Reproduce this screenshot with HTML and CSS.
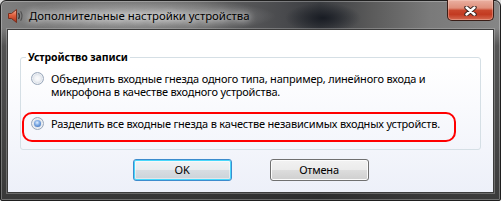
FILE: index.html
```html
<!DOCTYPE html>
<html lang="ru">
<head>
<meta charset="utf-8">
<title>Дополнительные настройки устройства</title>
<link rel="stylesheet" href="styles.css">
</head>
<body>
<div class="window">
  <div class="titlebar">
    <svg class="app-icon" width="16" height="16" viewBox="0 0 16 16">
      <defs>
        <linearGradient id="spk" x1="0" y1="0" x2="0" y2="1">
          <stop offset="0" stop-color="#f7b49c"/>
          <stop offset="0.45" stop-color="#e0603e"/>
          <stop offset="1" stop-color="#a8301a"/>
        </linearGradient>
      </defs>
      <path d="M1.5 5.5 H4.5 L9.5 1.5 V14.5 L4.5 10.5 H1.5 Z" fill="url(#spk)" stroke="#7a2f1c" stroke-width="1" stroke-linejoin="round"/>
      <path d="M11.5 5 Q13.3 8 11.5 11" fill="none" stroke="#3a3a3a" stroke-width="1.3"/>
      <path d="M13.6 3.2 Q16.4 8 13.6 12.8" fill="none" stroke="#505050" stroke-width="1.1"/>
    </svg>
    <span class="title">Дополнительные настройки устройства</span>
    <button class="close" type="button" aria-label="Закрыть">
      <svg width="13" height="10" viewBox="0 0 13 10">
        <path d="M2.5 1.5 L10.5 8.5 M10.5 1.5 L2.5 8.5" stroke="#3b2520" stroke-width="4.4" stroke-linecap="round"/>
        <path d="M2.5 1.5 L10.5 8.5 M10.5 1.5 L2.5 8.5" stroke="#ffffff" stroke-width="2.4" stroke-linecap="round"/>
      </svg>
    </button>
  </div>
  <div class="client">
    <fieldset class="group">
      <legend class="group-title">Устройство записи</legend>
      <label class="option">
        <span class="radio"></span>
        <span class="option-text">Объединить входные гнезда одного типа, например, линейного входа и микрофона в качестве входного устройства.</span>
      </label>
      <label class="option option-marked">
        <span class="radio radio-checked"></span>
        <span class="option-text">Разделить все входные гнезда в качестве независимых входных устройств.</span>
        <span class="highlight"></span>
      </label>
    </fieldset>
    <div class="buttons">
      <button class="btn btn-default" type="button">OK</button>
      <button class="btn" type="button">Отмена</button>
    </div>
  </div>
</div>
</body>
</html>
```
FILE: styles.css
```css
* { box-sizing: border-box; }

html, body {
  margin: 0;
  padding: 0;
  background: #dcdcdc;
}

.window {
  width: 501px;
  height: 201px;
  border: 1px solid #1f1f1f;
  border-radius: 6px 6px 2px 2px;
  padding: 0 6px 7px 6px;
  display: flex;
  flex-direction: column;
  box-shadow: inset 0 0 0 1px rgba(255, 255, 255, 0.28);
  background:
    radial-gradient(ellipse 135px 18px at 140px 15px, rgba(230, 230, 230, 0.6), rgba(230, 230, 230, 0)),
    radial-gradient(ellipse 38px 15px at 322px 17px, rgba(18, 22, 30, 0.85), rgba(18, 22, 30, 0)),
    linear-gradient(to bottom, rgba(48, 48, 48, 0) 0, rgba(48, 48, 48, 0) 27px, rgba(48, 48, 48, 0.55) 45px, rgba(40, 40, 40, 0.8) 100%),
    linear-gradient(to right, #7e7e7e 0, #767676 8%, #646464 40%, #4a4b4e 56%, #3a3c40 64%, #5a5a5a 74%, #7a7a7a 86%, #868686 100%);
}

.titlebar {
  height: 28px;
  flex: none;
  display: flex;
  align-items: flex-start;
}

.app-icon {
  margin-top: 7px;
  flex: none;
}

.title {
  margin: 8px 0 0 6px;
  font-family: "Noto Sans", sans-serif;
  font-size: 11.4px;
  line-height: 14px;
  color: #000;
  white-space: nowrap;
  text-shadow: 0 0 6px rgba(255, 255, 255, 0.85), 0 0 10px rgba(255, 255, 255, 0.6);
}

.close {
  margin: -1px 0 0 auto;
  width: 47px;
  height: 21px;
  padding: 0;
  border: 1px solid #3a1d16;
  border-top: none;
  border-radius: 0 0 5px 5px;
  display: flex;
  align-items: center;
  justify-content: center;
  background: linear-gradient(to bottom, #eab0a1 0, #df8f7b 40%, #c9462c 52%, #c23a21 72%, #d56a52 100%);
  box-shadow: inset 0 0 0 1px rgba(255, 220, 210, 0.35);
}

.close svg { display: block; margin-top: 1px; }

.client {
  flex: 1;
  border: 1px solid #3c3c3c;
  box-shadow: 0 0 0 1px rgba(200, 200, 200, 0.35);
  background: linear-gradient(to bottom, #ffffff 0, #ffffff 22%, #edf0f9 100%);
  display: flex;
  flex-direction: column;
  font-family: "Noto Sans", sans-serif;
  font-size: 11px;
  letter-spacing: -0.2px;
  color: #000;
}

.group {
  margin: 21px 12px 0 12px;
  padding: 8px 10px 19px 10px;
  border: 1px solid #d5dfe5;
  border-radius: 3px;
  min-width: 0;
  display: flex;
  flex-direction: column;
  gap: 19px;
}

.group-title {
  margin-left: -5px;
  padding: 0 2px;
  font-weight: 700;
  font-size: 10.5px;
  letter-spacing: -0.1px;
  line-height: 13px;
}

.option {
  position: relative;
  display: flex;
  align-items: flex-start;
  gap: 7px;
  line-height: 13px;
}

.radio {
  flex: none;
  width: 13px;
  height: 13px;
  border-radius: 50%;
  border: 1px solid #9aa8bb;
  background: radial-gradient(circle at 50% 50%, #fbfbfc 0, #f1f3f6 35%, #d0d7e1 70%, #bfc9d6 100%);
  box-shadow: inset 0 0 0 1px rgba(255, 255, 255, 0.6);
  position: relative;
}

.radio-checked::after {
  content: "";
  position: absolute;
  left: 2px;
  top: 2px;
  width: 7px;
  height: 7px;
  border-radius: 50%;
  background: radial-gradient(circle at 45% 38%, #e3f0ff 0, #8db6ea 35%, #4a7dc6 75%, #2d5aa0 100%);
}

.option-text { flex: 1; }

.highlight {
  position: absolute;
  left: -9px;
  top: -5px;
  width: 434px;
  height: 30px;
  border: 2.5px solid #ff0000;
  border-radius: 10px;
  pointer-events: none;
}

.buttons {
  margin-top: 9px;
  display: flex;
  justify-content: center;
  gap: 38px;
}

.btn {
  width: 99px;
  height: 22px;
  padding: 0;
  font-family: "Noto Sans", sans-serif;
  font-size: 11px;
  letter-spacing: -0.2px;
  line-height: 14px;
  color: #000;
  border: 1px solid #707070;
  border-radius: 3px;
  background: linear-gradient(to bottom, #f2f2f2 0, #ebebeb 50%, #dddddd 51%, #cfcfcf 100%);
  box-shadow: inset 0 0 0 1px #fcfcfc;
}

.btn-default {
  border-color: #3c8ccd;
  box-shadow: inset 0 0 0 1px #48d7fb, inset 0 0 0 2px rgba(255, 255, 255, 0.45);
  background: linear-gradient(to bottom, #f0f3f5 0, #e8ecef 50%, #d8dde2 51%, #cbd2d8 100%);
}
```
